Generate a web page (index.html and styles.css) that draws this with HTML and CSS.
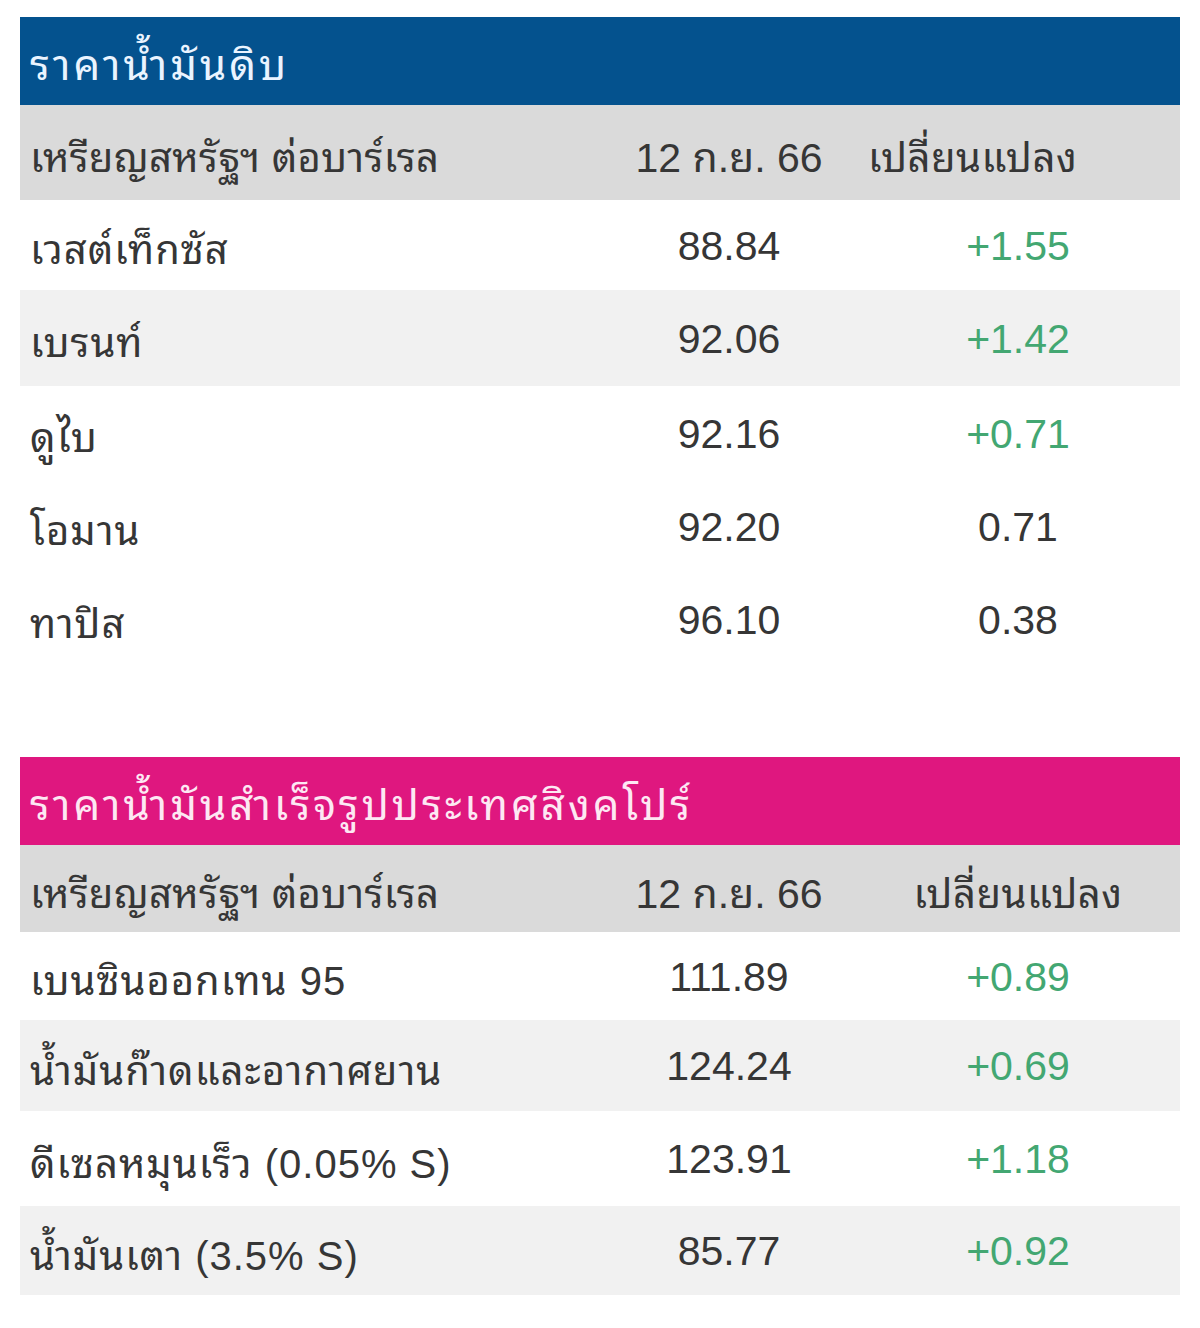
FILE: index.html
```html
<!DOCTYPE html>
<html lang="th">
<head>
<meta charset="utf-8">
<title>ราคาน้ำมัน</title>
<link rel="stylesheet" href="styles.css">
</head>
<body>
<div class="page">
  <section class="price-table crude">
    <div class="title">ราคาน้ำมันดิบ</div>
    <div class="row head">
      <div class="cell name">เหรียญสหรัฐฯ ต่อบาร์เรล</div>
      <div class="cell num">12 ก.ย. 66</div>
      <div class="cell chg left">เปลี่ยนแปลง</div>
    </div>
    <div class="row r1"><div class="cell name">เวสต์เท็กซัส</div><div class="cell num">88.84</div><div class="cell chg up">+1.55</div></div>
    <div class="row r2 alt"><div class="cell name">เบรนท์</div><div class="cell num">92.06</div><div class="cell chg up">+1.42</div></div>
    <div class="row r3"><div class="cell name">ดูไบ</div><div class="cell num">92.16</div><div class="cell chg up">+0.71</div></div>
    <div class="row r4"><div class="cell name">โอมาน</div><div class="cell num">92.20</div><div class="cell chg">0.71</div></div>
    <div class="row r5"><div class="cell name">ทาปิส</div><div class="cell num">96.10</div><div class="cell chg">0.38</div></div>
  </section>

  <section class="price-table refined">
    <div class="title">ราคาน้ำมันสำเร็จรูปประเทศสิงคโปร์</div>
    <div class="row head">
      <div class="cell name">เหรียญสหรัฐฯ ต่อบาร์เรล</div>
      <div class="cell num">12 ก.ย. 66</div>
      <div class="cell chg">เปลี่ยนแปลง</div>
    </div>
    <div class="row s1"><div class="cell name">เบนซินออกเทน 95</div><div class="cell num">111.89</div><div class="cell chg up">+0.89</div></div>
    <div class="row s2 alt"><div class="cell name">น้ำมันก๊าดและอากาศยาน</div><div class="cell num">124.24</div><div class="cell chg up">+0.69</div></div>
    <div class="row s3"><div class="cell name">ดีเซลหมุนเร็ว (0.05% S)</div><div class="cell num">123.91</div><div class="cell chg up">+1.18</div></div>
    <div class="row s4 alt"><div class="cell name">น้ำมันเตา (3.5% S)</div><div class="cell num">85.77</div><div class="cell chg up">+0.92</div></div>
  </section>
</div>
</body>
</html>
```

FILE: styles.css
```css
html, body {
  margin: 0;
  padding: 0;
  background: #ffffff;
}

body {
  font-family: "Liberation Sans", "Noto Sans Thai Looped", "Tahoma", "Loma", "Garuda", "Waree", "Noto Sans Thai", "Noto Sans", sans-serif;
  font-size: 40px;
  color: #363636;
}

.page {
  padding: 17px 20px 0 20px;
  width: 1160px;
}

.price-table {
  display: flex;
  flex-direction: column;
}

.price-table.refined {
  margin-top: 91px;
}

.title {
  height: 88px;
  display: flex;
  align-items: center;
  padding: 0 10px;
  font-size: 42px;
  letter-spacing: 3px;
  color: #eaf4ff;
}

.crude .title {
  background: #04528e;
}

.refined .title {
  background: #df177f;
  color: #fde8f3;
}

.row {
  display: grid;
  grid-template-columns: 582px 254px 324px;
  height: 93px;
  align-items: center;
  background: #ffffff;
}

.row.head {
  background: #dadada;
  height: 95px;
}

.refined .row.head {
  height: 87px;
}

.row.alt {
  background: #f1f1f1;
}

.crude .r1 { height: 90px; }
.crude .r2 { height: 96px; }
.crude .r3 { height: 94px; }
.crude .r4 { height: 92px; }
.crude .r5 { height: 94px; }

.refined .s1 { height: 88px; }
.refined .s2 { height: 91px; }
.refined .s3 { height: 95px; }
.refined .s4 { height: 89px; }

.cell {
  padding: 0 10px;
  white-space: nowrap;
  padding-top: 2px;
}

.cell.name {
  letter-spacing: 1px;
}

.row.head .cell.name {
  letter-spacing: 0.3px;
}

.cell.num {
  text-align: center;
  font-size: 41px;
}

.cell.chg {
  text-align: center;
  font-size: 41px;
}

.row.head .cell.chg {
  font-size: 40px;
  letter-spacing: 0.5px;
}

.cell.chg.left {
  text-align: left;
  padding-left: 12px;
}

.cell.up {
  color: #43a772;
}
```
